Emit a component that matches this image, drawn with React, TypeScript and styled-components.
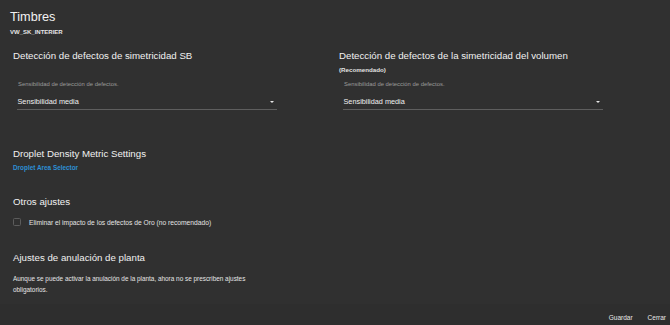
import styled, { createGlobalStyle } from "styled-components"

const GlobalStyle = createGlobalStyle`
    html, body {
        margin: 0;
        padding: 0;
        background: #303030;
    }
    body {
        font-family: "Liberation Sans", Arial, Helvetica, sans-serif;
        color: #ececec;
    }
    * { box-sizing: border-box; }
`

const Dialog = styled.div({
    width: 670,
    height: 325,
    display: 'flex',
    flexDirection: 'column',
    background: '#303030',
    overflow: 'hidden',
})

const Header = styled.div({
    padding: '9px 10px 0',
})

const Title = styled.div({
    fontSize: 12.7,
    lineHeight: '16px',
    color: '#f2f2f2',
})

const Subtitle = styled.div({
    marginTop: 3,
    fontSize: 6,
    lineHeight: '8px',
    fontWeight: 700,
    color: '#e6e6e6',
})

const Body = styled.div({
    flex: 1,
    padding: '0 18px 0 13px',
})

const Columns = styled.div({
    marginTop: 14,
    display: 'grid',
    gridTemplateColumns: '1fr 1fr',
    columnGap: 13,
})

const HeadingBlock = styled.div({
    height: 31,
})

const Heading = styled.div((props: { top?: number }) => ({
    marginTop: props.top ?? 0,
    fontSize: 9.7,
    lineHeight: '12px',
    color: '#f0f0f0',
}))

const Note = styled.div({
    marginTop: 4,
    fontSize: 6.2,
    lineHeight: '8px',
    fontWeight: 700,
    color: '#e2e2e2',
})

const Select = styled.div({
    marginLeft: 3.5,
    width: 260,
})

const SelectLabel = styled.div({
    paddingLeft: 1.5,
    fontSize: 5.9,
    lineHeight: '7px',
    color: '#9b9b9b',
})

const Field = styled.div({
    marginTop: 6,
    height: 16,
    display: 'flex',
    alignItems: 'center',
    justifyContent: 'space-between',
    padding: '0 3px 0 1px',
    borderBottom: '1px solid #5e5e5e',
    fontSize: 7.3,
    color: '#f0f0f0',
})

const Caret = styled.span({
    width: 0,
    height: 0,
    borderLeft: '2.5px solid transparent',
    borderRight: '2.5px solid transparent',
    borderTop: '2.5px solid #e8e8e8',
})

const Link = styled.a({
    display: 'block',
    marginTop: 4,
    fontSize: 6.4,
    lineHeight: '8px',
    fontWeight: 700,
    color: '#2d8fd5',
    textDecoration: 'none',
})

const CheckRow = styled.label({
    marginTop: 9,
    height: 10,
    display: 'flex',
    alignItems: 'center',
    gap: 8,
    fontSize: 6.7,
    color: '#e4e4e4',
})

const Box = styled.span({
    width: 8,
    height: 8,
    border: '1px solid #5c5c5c',
    borderRadius: 1.5,
})

const Paragraph = styled.p({
    margin: '8.5px 0 0',
    maxWidth: 264,
    fontSize: 6.4,
    lineHeight: '11px',
    color: '#e6e6e6',
})

const Footer = styled.div({
    height: 21,
    padding: '6px 4px 0',
    display: 'flex',
    justifyContent: 'flex-end',
    gap: 15,
    background: '#2e2e2e',
})

const FooterButton = styled.button({
    border: 0,
    padding: 0,
    background: 'transparent',
    fontFamily: 'inherit',
    fontSize: 6.5,
    lineHeight: '8px',
    color: '#e8e8e8',
    cursor: 'pointer',
})

function SensitivitySelect(): JSX.Element {
    return (
        <Select>
            <SelectLabel>Sensibilidad de detección de defectos.</SelectLabel>
            <Field>
                <span>Sensibilidad media</span>
                <Caret />
            </Field>
        </Select>
    )
}

function App(): JSX.Element {
    return (
        <Dialog>
            <GlobalStyle />
            <Header>
                <Title>Timbres</Title>
                <Subtitle>VW_SK_INTERIER</Subtitle>
            </Header>
            <Body>
                <Columns>
                    <div>
                        <HeadingBlock>
                            <Heading>Detección de defectos de simetricidad SB</Heading>
                        </HeadingBlock>
                        <SensitivitySelect />
                    </div>
                    <div>
                        <HeadingBlock>
                            <Heading>Detección de defectos de la simetricidad del volumen</Heading>
                            <Note>(Recomendado)</Note>
                        </HeadingBlock>
                        <SensitivitySelect />
                    </div>
                </Columns>

                <Heading top={38}>Droplet Density Metric Settings</Heading>
                <Link href="#">Droplet Area Selector</Link>

                <Heading top={24}>Otros ajustes</Heading>
                <CheckRow>
                    <Box />
                    Eliminar el impacto de los defectos de Oro (no recomendado)
                </CheckRow>

                <Heading top={25}>Ajustes de anulación de planta</Heading>
                <Paragraph>
                    Aunque se puede activar la anulación de la planta, ahora no se prescriben ajustes obligatorios.
                </Paragraph>
            </Body>
            <Footer>
                <FooterButton>Guardar</FooterButton>
                <FooterButton>Cerrar</FooterButton>
            </Footer>
        </Dialog>
    )
}

export default App
